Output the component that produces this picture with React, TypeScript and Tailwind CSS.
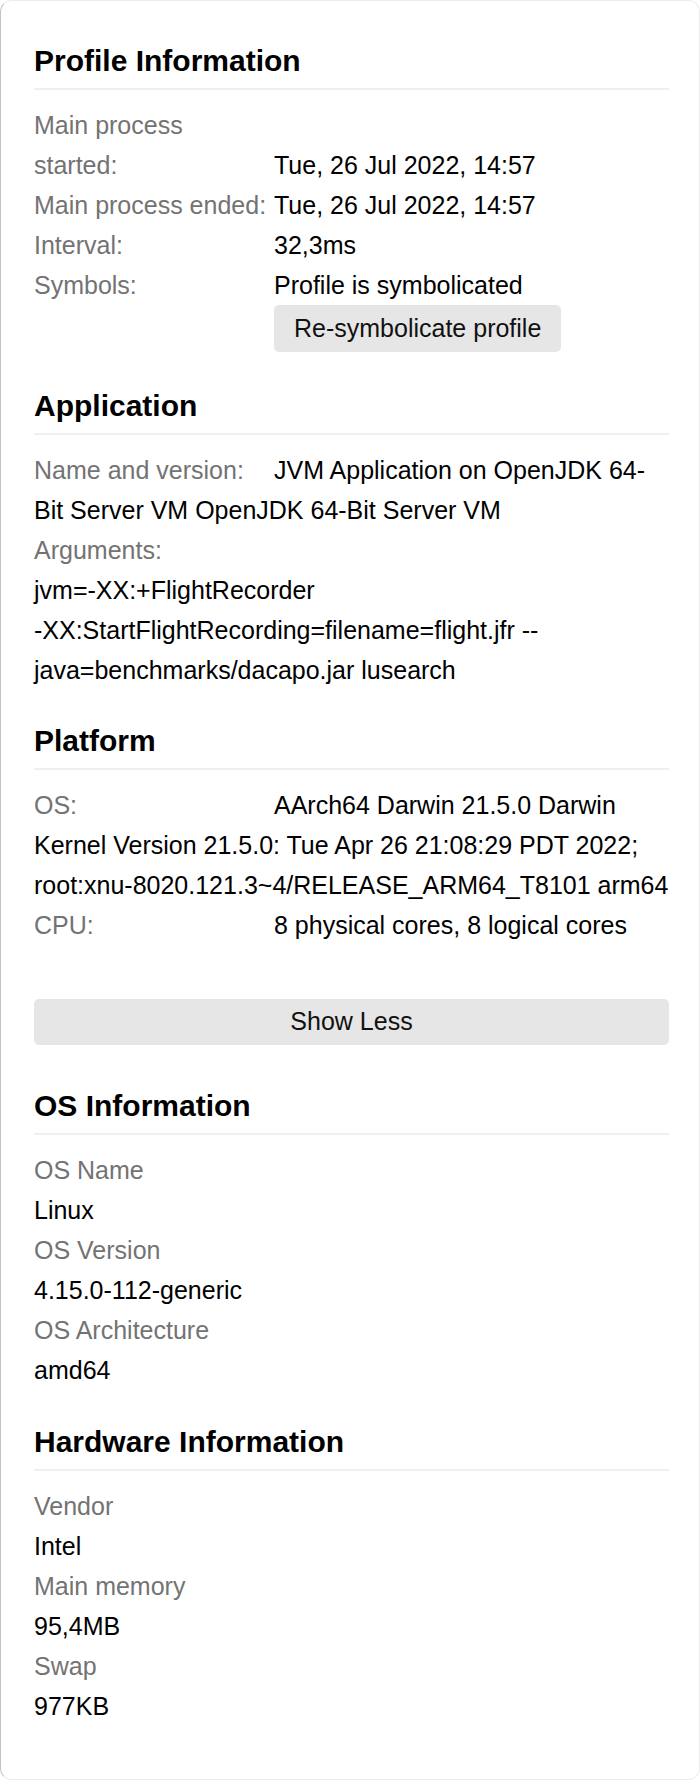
import React from 'react';

type RowProps = {
  label: React.ReactNode;
  lines: string[];
};

function Row({ label, lines }: RowProps) {
  return (
    <div className="leading-[40px]">
      <span className="inline-block w-[240px] text-[#737373]">{label}</span>
      {lines.map((line, i) => (
        <React.Fragment key={i}>
          {i > 0 && <br />}
          <span className="whitespace-nowrap">{line}</span>
        </React.Fragment>
      ))}
    </div>
  );
}

function Field({ label, value }: { label: string; value: string }) {
  return (
    <>
      <div className="leading-[40px] text-[#737373]">{label}</div>
      <div className="leading-[40px]">{value}</div>
    </>
  );
}

function Heading({ children }: { children: React.ReactNode }) {
  return (
    <h2 className="text-[30px] font-bold leading-[36px] pb-[9px] border-b-2 border-[#efefef] mb-[15px]">
      {children}
    </h2>
  );
}

export default function App() {
  return (
    <div className="w-[700px] h-[1780px] bg-white">
      <div
        className="h-full rounded-[12px] border border-[#ececec] border-l-[#c4c4c4] bg-white pt-[42px] pl-[33px] pr-[30px] text-[25px] text-black"
        style={{ fontFamily: '"Liberation Sans", Arial, sans-serif' }}
      >
        <section>
          <Heading>Profile Information</Heading>
          <Row
            label={
              <>
                Main process
                <br />
                started:
              </>
            }
            lines={['Tue, 26 Jul 2022, 14:57']}
          />
          <Row label="Main process ended:" lines={['Tue, 26 Jul 2022, 14:57']} />
          <Row label="Interval:" lines={['32,3ms']} />
          <Row label="Symbols:" lines={['Profile is symbolicated']} />
          <button className="block ml-[240px] h-[47px] px-5 rounded-[5px] bg-[#e6e6e6] text-[#111]">
            Re-symbolicate profile
          </button>
        </section>

        <section className="mt-9">
          <Heading>Application</Heading>
          <Row
            label="Name and version:"
            lines={['JVM Application on OpenJDK 64-', 'Bit Server VM OpenJDK 64-Bit Server VM']}
          />
          <Row
            label="Arguments:"
            lines={[
              '',
              'jvm=-XX:+FlightRecorder',
              '-XX:StartFlightRecording=filename=flight.jfr --',
              'java=benchmarks/dacapo.jar lusearch',
            ]}
          />
        </section>

        <section className="mt-[33px]">
          <Heading>Platform</Heading>
          <Row
            label="OS:"
            lines={[
              'AArch64 Darwin 21.5.0 Darwin',
              'Kernel Version 21.5.0: Tue Apr 26 21:08:29 PDT 2022;',
              'root:xnu-8020.121.3~4/RELEASE_ARM64_T8101 arm64',
            ]}
          />
          <Row label="CPU:" lines={['8 physical cores, 8 logical cores']} />
        </section>

        <button className="block mt-[54px] w-full h-[46px] rounded-[5px] bg-[#e6e6e6] text-[#111]">
          Show Less
        </button>

        <section className="mt-[43px]">
          <Heading>OS Information</Heading>
          <Field label="OS Name" value="Linux" />
          <Field label="OS Version" value="4.15.0-112-generic" />
          <Field label="OS Architecture" value="amd64" />
        </section>

        <section className="mt-[34px]">
          <Heading>Hardware Information</Heading>
          <Field label="Vendor" value="Intel" />
          <Field label="Main memory" value="95,4MB" />
          <Field label="Swap" value="977KB" />
        </section>
      </div>
    </div>
  );
}
